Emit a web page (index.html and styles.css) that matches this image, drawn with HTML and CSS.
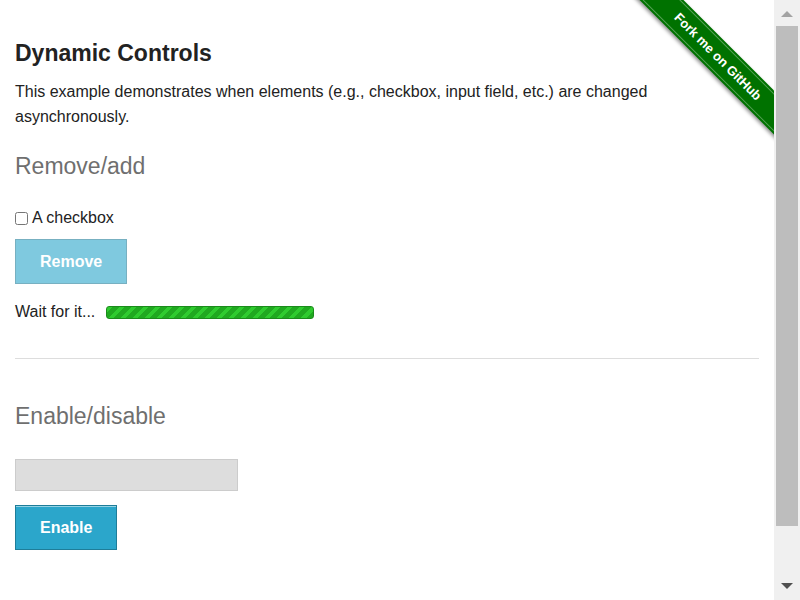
FILE: index.html
```html
<!DOCTYPE html>
<html>
<head>
<meta charset="utf-8">
<title>The Internet</title>
<link rel="stylesheet" href="styles.css">
</head>
<body>
<div class="window">
  <main class="viewport">
    <div class="ribbon"><a class="ribbon-band" href="#">Fork me on GitHub</a></div>
    <div class="page">
      <h3 class="title">Dynamic Controls</h3>
      <p class="intro">This example demonstrates when elements (e.g., checkbox, input field, etc.) are changed asynchronously.</p>

      <h4 class="subtitle">Remove/add</h4>
      <div class="checkbox-row"><input type="checkbox" class="check"><span>A checkbox</span></div>
      <button class="btn btn-disabled" type="button">Remove</button>
      <div class="loading"><span>Wait for it...</span><span class="progress"></span></div>

      <hr class="divider">

      <h4 class="subtitle subtitle-second">Enable/disable</h4>
      <div class="field"></div>
      <button class="btn btn-primary" type="button">Enable</button>
    </div>
  </main>
  <div class="scrollbar">
    <div class="sb-button sb-up"><span class="arrow-up"></span></div>
    <div class="sb-track"><div class="sb-thumb"></div></div>
    <div class="sb-button sb-down"><span class="arrow-down"></span></div>
  </div>
</div>
</body>
</html>
```
FILE: styles.css
```css
html, body {
  margin: 0;
  padding: 0;
}
body {
  font-family: "Liberation Sans", Arial, sans-serif;
  color: #222;
  background: #fff;
  font-size: 16px;
}
.window {
  display: flex;
  height: 600px;
  overflow: hidden;
}
.viewport {
  position: relative;
  flex: 1;
  min-width: 0;
  overflow: hidden;
}
.page {
  padding: 1px 15px 0;
}
.scrollbar {
  width: 26px;
  flex: none;
  display: flex;
  flex-direction: column;
  background: #f0f0f0;
}
.sb-button {
  height: 26px;
  flex: none;
  display: flex;
  justify-content: center;
}
.sb-up {
  align-items: flex-start;
}
.sb-down {
  align-items: flex-start;
}
.arrow-up {
  width: 0;
  height: 0;
  margin-top: 11px;
  border-left: 6px solid transparent;
  border-right: 6px solid transparent;
  border-bottom: 6px solid #a3a3a3;
}
.arrow-down {
  width: 0;
  height: 0;
  margin-top: 9px;
  border-left: 6px solid transparent;
  border-right: 6px solid transparent;
  border-top: 6px solid #505050;
}
.sb-track {
  flex: 1;
  padding: 0 2px;
}
.sb-thumb {
  height: 500px;
  background: #bdbdbd;
}
.title {
  font-size: 23px;
  font-weight: bold;
  line-height: 28px;
  margin: 38px 0 0;
  color: #222;
}
.intro {
  margin: 12px 0 0;
  line-height: 25px;
  font-size: 16px;
}
.subtitle {
  font-size: 23px;
  font-weight: normal;
  line-height: 28px;
  color: #6f6f6f;
  margin: 23px 0 0;
}
.subtitle-second {
  margin-top: 43px;
}
.checkbox-row {
  display: flex;
  align-items: center;
  margin-top: 26px;
  height: 24px;
  line-height: 24px;
}
.check {
  margin: 0 4px 0 0;
  width: 13px;
  height: 13px;
}
.btn {
  display: block;
  box-sizing: border-box;
  height: 45px;
  padding: 0 24px;
  margin: 9px 0 0;
  font-family: "Liberation Sans", Arial, sans-serif;
  font-size: 16px;
  font-weight: bold;
  color: #fff;
  border: 1px solid #1e7d99;
  background: #2ba6cb;
  box-shadow: inset 0 1px 0 rgba(255,255,255,0.5);
  cursor: pointer;
}
.btn-primary {
  margin-top: 14px;
}
.btn-disabled {
  opacity: 0.6;
  box-shadow: none;
  cursor: default;
}
.loading {
  display: flex;
  align-items: center;
  margin-top: 16px;
  height: 24px;
}
.progress {
  display: inline-block;
  box-sizing: border-box;
  width: 208px;
  height: 13px;
  margin-left: 11px;
  border: 1px solid #1b8c1b;
  border-radius: 3px;
  background: repeating-linear-gradient(135deg, #2fcb2f 0, #2fcb2f 4px, #20a920 4px, #20a920 8.5px);
}
.divider {
  border: 0;
  border-top: 1px solid #ddd;
  margin: 34px 0 0;
  height: 0;
}
.field {
  box-sizing: border-box;
  width: 223px;
  height: 32px;
  margin-top: 29px;
  background: #ddd;
  border: 1px solid #ccc;
}
.ribbon {
  position: absolute;
  top: 0;
  right: 0;
  width: 150px;
  height: 150px;
  overflow: hidden;
  z-index: 10;
}
.ribbon-band {
  position: absolute;
  box-sizing: border-box;
  width: 250px;
  height: 31px;
  left: -31px;
  top: 41px;
  transform: rotate(45deg);
  background: #007200;
  color: #fff;
  font-family: "Liberation Sans", Arial, sans-serif;
  font-weight: bold;
  font-size: 13px;
  line-height: 31px;
  text-align: center;
  text-decoration: none;
  box-shadow: 0 2px 4px rgba(0,0,0,0.45);
}
.ribbon-band::before,
.ribbon-band::after {
  content: "";
  position: absolute;
  left: 0;
  right: 0;
  height: 1px;
  background: rgba(255,255,255,0.35);
}
.ribbon-band::before { top: 2px; }
.ribbon-band::after { bottom: 2px; }
```
